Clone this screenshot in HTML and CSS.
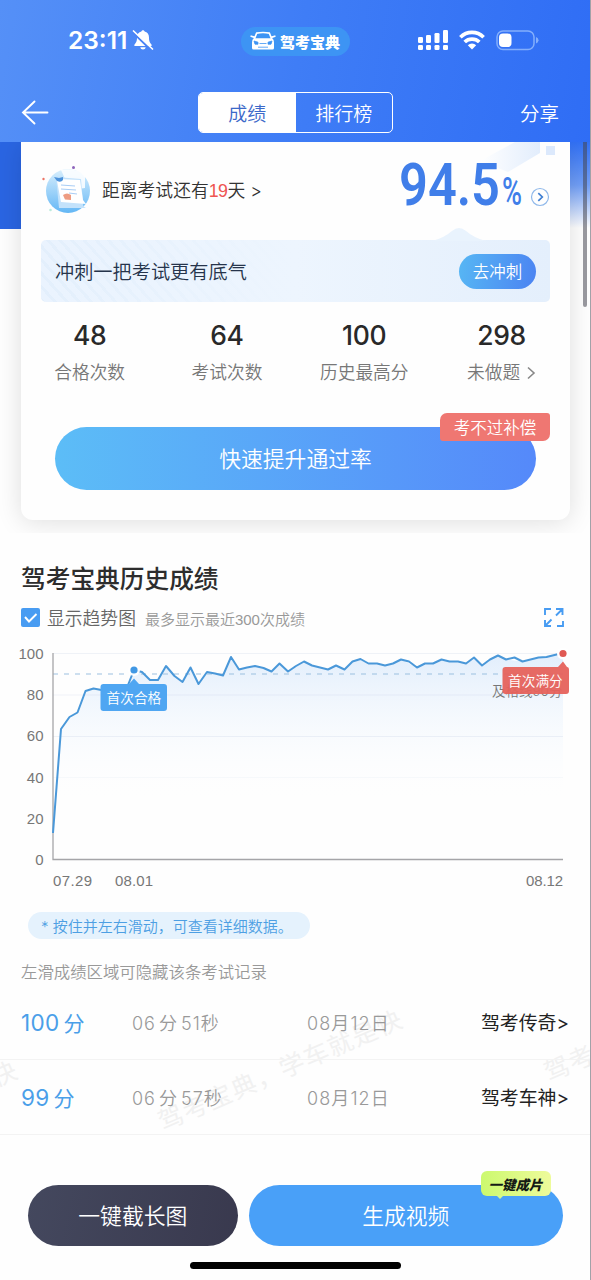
FILE: index.html
```html
<!DOCTYPE html>
<html lang="zh-CN">
<head>
<meta charset="utf-8">
<title>驾考宝典</title>
<link rel="stylesheet" href="styles.css">
</head>
<body>
<div class="screen">
  <header class="header">
    <div class="status">
      <div class="clock">
        <span class="time">23:11</span>
        <svg width="22" height="22" viewBox="0 0 22 22"><path d="M11 1.200c-.9 0-1.500.6-1.600 1.400C6.600 3.300 5 5.500 5 8.500c0 4-1 5.300-2.300 6.700-.8 1-.4 1.800.5 1.800h15.600c.9 0 1.300-.8.5-1.800C18 13.800 17 12.500 17 8.500c0-3-1.600-5.200-4.400-5.900C12.500 1.800 11.900 1.200 11 1.200zM8.300 18.300c.3 1.400 1.300 2.200 2.700 2.200s2.400-.8 2.700-2.200z" fill="#fff"/><path d="M1 3.500L18.500 20.500" stroke="#4a83f5" stroke-width="2.200"/><path d="M1.500 2l19 18" stroke="#fff" stroke-width="1.700" stroke-linecap="round"/></svg>
      </div>
      <div class="brand">
        <svg width="26" height="20" viewBox="0 0 26 20"><g fill="none" stroke="#fff" stroke-width="1.700" stroke-linejoin="round" stroke-linecap="round"><path d="M4.500 7.500L6.600 2.200Q13 .8 19.400 2.200l2.100 5.300M1.200 5.200l2.800.9M24.800 5.200l-2.800.9"/></g><path d="M4 7.200h18q2 1.200 2 4V17q0 1.500-1.500 1.500h-19Q2 18.500 2 17v-5.800q0-2.800 2-4z" fill="#fff"/><path d="M4 10l4 1.200v2H5zM22 10l-4 1.200v2h3zM9.500 12.500h7M8 16.200h10" fill="#3d94f4" stroke="#3d94f4" stroke-width=".8"/></svg>
        <span class="brand-name">驾考宝典</span>
      </div>
      <div class="signals">
        <svg width="32" height="22" viewBox="0 0 32 22" fill="#fff"><rect x="1" y="8" width="5" height="6" rx="1.300"/><rect x="9" y="6" width="5" height="8" rx="1.300"/><rect x="17.500" y="4" width="5" height="10" rx="1.300"/><rect x="26" y="1" width="5" height="13" rx="1.300"/><rect x="1" y="16" width="5" height="5" rx="1.300"/><rect x="9" y="16" width="5" height="5" rx="1.300"/><rect x="17.500" y="16" width="5" height="5" rx="1.300"/><rect x="26" y="16" width="5" height="5" rx="1.300"/></svg>
        <svg width="26" height="20" viewBox="0 0 26 20"><g fill="none" stroke="#fff" stroke-width="3.700"><path d="M1.400 7.200a16.500 16.500 0 0 1 23.200 0M5.700 12a10.500 10.500 0 0 1 14.600 0"/></g><path d="M8.800 15.300a6 6 0 0 1 8.400 0L13 19.500z" fill="#fff"/></svg>
        <svg width="44" height="21" viewBox="0 0 44 21"><rect x="2" y="1" width="37" height="18.500" rx="6" fill="none" stroke="#83aefc" stroke-width="1.500"/><rect x="4" y="3.500" width="12.500" height="13.500" rx="4" fill="#fff"/><path d="M41 7q2.500 1 2.500 3.300T41 13.500z" fill="#83aefc"/></svg>
      </div>
    </div>
    <nav class="nav">
      <svg class="back" width="28" height="26" viewBox="0 0 28 26" fill="none" stroke="#fff" stroke-width="1.900" stroke-linecap="round"><path d="M26.500 12.500H2M13.500 1.500L2 12.500l11.500 11"/></svg>
      <div class="tabs"><span class="tab tab-on">成绩</span><span class="tab">排行榜</span></div>
      <span class="share">分享</span>
    </nav>
  </header>

  <section class="summary">
    <div class="scrollbar"></div>
    <div class="card">
      <svg class="card-decor" width="80" height="35" viewBox="0 0 80 35"><defs><linearGradient id="dg"><stop offset="0" stop-color="#fff"/><stop offset="1" stop-color="#e2edfc"/></linearGradient></defs><path d="M0 19L35 0H60v11L28 30z" fill="url(#dg)"/><rect x="66" y="4" width="9" height="9" fill="#dce9fc"/></svg>
      <div class="exam">
        <svg width="52" height="52" viewBox="0 0 52 52"><defs><linearGradient id="orb" x1="0" y1="0" x2="0" y2="1"><stop offset="0" stop-color="#d9effd"/><stop offset="1" stop-color="#64b7f5"/></linearGradient></defs><circle cx="27" cy="26" r="22" fill="url(#orb)"/><path d="M20 5q15-3 24 6v12l-15 2z" fill="#fff" opacity=".85"/><path d="M15 12l25 2 2 23q-1 4 3 6H18z" fill="#c3e2fb"/><path d="M18 14l21 1 3 20 3 4-25-2-4-21z" fill="#fff"/><path d="M13 12l5 1 4-1v3q-2 3-6 1z" fill="#4e93db"/><path d="M20 20l14 1M20 24l15 1M28 28l8 1" stroke="#a9cdf5" stroke-width="1.200"/><path d="M22 30q4-3 8 0v5l-6-.5z" fill="#ee9c82"/><circle cx="32.500" cy="2.500" r="1.500" fill="#8e65bb"/><circle cx="2.500" cy="14" r="1.200" fill="#ec7465"/><circle cx="9.500" cy="45" r="1.300" fill="#bcebdc"/></svg>
        <span class="countdown">距离考试还有<em>19</em>天 &gt;</span>
        <svg class="rate" width="128" height="72" viewBox="0 0 128 72"><g font-family="Roboto, sans-serif" fill="#407ee9"><text x="0" y="56" font-size="60" font-weight="600" textLength="101" lengthAdjust="spacingAndGlyphs">94.5</text><text x="103" y="56" font-size="39" font-weight="500" textLength="20" lengthAdjust="spacingAndGlyphs">%</text></g></svg>
        <svg class="go" width="20" height="20" viewBox="0 0 20 20" fill="none"><circle cx="10" cy="10" r="8.500" stroke="#8fb8ea" stroke-width="1.200"/><path d="M8.300 6.200l4 3.800-4 3.800" stroke="#3f7fd2" stroke-width="1.700"/></svg>
      </div>
      <div class="banner">
        <svg class="banner-peak" width="54" height="14" viewBox="0 0 54 14"><path d="M0 14Q12 11 20 4q7-6 14 0 8 7 20 10z" fill="#e9f3fd"/></svg>
        <span class="banner-text">冲刺一把考试更有底气</span>
        <span class="banner-btn">去冲刺</span>
      </div>
      <div class="stats">
        <div class="stat"><b>48</b><span>合格次数</span></div>
        <div class="stat"><b>64</b><span>考试次数</span></div>
        <div class="stat"><b>100</b><span>历史最高分</span></div>
        <div class="stat"><b>298</b><span>未做题<svg width="9" height="14" viewBox="0 0 9 14" fill="none" stroke="#888" stroke-width="1.600"><path d="M1 1.500L7 7 1 12.500"/></svg></span></div>
      </div>
      <div class="boost">快速提升通过率<span class="ribbon">考不过补偿</span></div>
    </div>
  </section>

  <section class="history">
    <h1 class="title">驾考宝典历史成绩</h1>
    <div class="options">
      <svg width="20" height="20" viewBox="0 0 20 20"><rect x="0" y="0" width="19" height="19" rx="2" fill="#489cf2"/><path d="M4 9l4 4.500 7.500-7.500" fill="none" stroke="#fff" stroke-width="1.900"/></svg>
      <span class="opt-label">显示趋势图</span>
      <span class="opt-hint">最多显示最近300次成绩</span>
      <svg class="expand" width="20" height="20" viewBox="0 0 20 20" fill="none" stroke="#489cf2" stroke-width="1.900"><path d="M1 7V1h6M19 13v5h-6M12 1h6.500v6M18 1.500l-6 6M7 18H1v-6M1.500 17.500l6-6"/></svg>
    </div>
    <svg class="chart" width="591" height="254" viewBox="0 640 591 254">
      <defs><linearGradient id="area" x1="0" y1="655" x2="0" y2="805" gradientUnits="userSpaceOnUse"><stop offset="0" stop-color="#e2eefc"/><stop offset="1" stop-color="#fff" stop-opacity="0"/></linearGradient></defs>
      <polygon fill="url(#area)" points="53,833 61,729 69.500,717 77.500,712.500 85.500,691 93.500,688.500 101.500,690 126,690 134,670 142,672 150,680 158,680 166,666 174.500,676 182.500,682 190.500,667.500 198.500,684 207,672 223,675.500 231,657 239,669.500 255,666 271.500,671.500 279.500,663.500 288,671.500 304,661.500 312,665.500 328,669.500 336,665.500 344.500,669.500 352.500,661.500 360.500,659 368.500,663.500 385,665.500 401,659.500 417,667.500 441.500,659.500 466,663.500 474,657.500 482,665.500 498,655.500 506,659.500 522.500,661.500 563,653 563,859 53,859"/>
      <path d="M53 653.500H563M53 695H563M53 736.500H563" stroke="#8aa3c8" stroke-opacity=".13"/>
      <path d="M53 777.500H563" stroke="#8aa3c8" stroke-opacity=".06"/>
      <path d="M53 674H563" stroke="#9cbfe0" stroke-width="1.200" stroke-dasharray="5 6"/>
      <path d="M53 653V859.500H563" fill="none" stroke="#a5a5a8" stroke-width="1.300"/>
      <polyline fill="none" stroke="#4a98d9" stroke-width="2" stroke-linejoin="round" points="53,833 61,729 69.500,717 77.500,712.500 85.500,691 93.500,688.500 101.500,690 109.500,690 126,690 134,670 142,672 150,680 158,680 166,666 174.500,676 182.500,682 190.500,667.500 198.500,684 207,672 215,673.500 223,675.500 231,657 239,669.500 247,667.500 255,666 263.500,668 271.500,671.500 279.500,663.500 288,671.500 296,666 304,661.500 312,665.500 320,667.500 328,669.500 336,665.500 344.500,669.500 352.500,661.500 360.500,659 368.500,663.500 377,663.500 385,665.500 393,663.500 401,659.500 409,661.500 417,667.500 425,663.500 433,663.500 441.500,659.500 449.500,661.500 458,661.500 466,663.500 474,657.500 482,665.500 490,659.500 498,655.500 506,659.500 514.500,657.500 522.500,661.500 530.500,659.500 538.500,657.500 546.500,657 554.500,655 563,653"/>
      <text class="limit" x="492" y="695.500">及格线90分</text>
      <circle cx="134" cy="670" r="6" fill="#fff" fill-opacity=".93"/><circle cx="134" cy="670" r="3.600" fill="#4198e4"/>
      <circle cx="563" cy="653.500" r="6" fill="#fff"/><circle cx="563" cy="653.500" r="3.600" fill="#e05953"/>
      <path d="M103.500 684H129l5-5.500 5 5.500h25q3 0 3 3v21q0 3-3 3h-60.500q-3 0-3-3v-21q0-3 3-3z" fill="#4fa6f2"/>
      <path d="M505.500 667H558l5-5.500 4 5.500q2 0 2 3v21q0 3-3 3h-60.500q-3 0-3-3v-21q0-3 3-3z" fill="#e6625c" fill-opacity=".95"/>
      <text class="tip" x="106.500" y="702.500">首次合格</text><text class="tip" x="508" y="686">首次满分</text>
      <g class="axis"><g text-anchor="end"><text x="43.500" y="658.500">100</text><text x="43.500" y="700">80</text><text x="43.500" y="741">60</text><text x="43.500" y="782.500">40</text><text x="43.500" y="824">20</text><text x="43.500" y="865">0</text></g><text x="53" y="886" textLength="39">07.29</text><text x="115" y="886" textLength="38">08.01</text><text x="526" y="886" textLength="37">08.12</text></g>
    </svg>
    <div class="notice">* 按住并左右滑动，可查看详细数据。</div>
    <p class="swipe">左滑成绩区域可隐藏该条考试记录</p>
    <div class="records">
      <svg class="watermark" width="591" height="135" viewBox="0 1000 591 135"><text transform="translate(163 1130) rotate(-23.500)">驾考宝典，学车就是快</text><text transform="translate(-222 1181) rotate(-23.500)">驾考宝典，学车就是快</text><text transform="translate(549 1081) rotate(-23.500)">驾考宝典，学车就是快</text></svg>
      <div class="record"><span class="score">100<i>分</i></span><span class="spent">06<i>分</i>51秒</span><span class="date">08月12日</span><span class="rank">驾考传奇&gt;</span></div>
      <div class="record"><span class="score">99<i>分</i></span><span class="spent">06<i>分</i>57秒</span><span class="date">08月12日</span><span class="rank">驾考车神&gt;</span></div>
    </div>
  </section>

  <footer class="footer">
    <div class="actions">
      <div class="action shot">一键截长图</div>
      <div class="action video">生成视频<span class="bubble">一键成片</span></div>
    </div>
    <div class="home"></div>
  </footer>
</div>
</body>
</html>
```
FILE: styles.css
```css
* { box-sizing: border-box; }
body { margin: 0; background: #fefefe; }
.screen {
  position: relative;
  width: 591px;
  height: 1280px;
  overflow: hidden;
  display: flex;
  flex-direction: column;
  background: #fefefe;
  border-right: 1px solid #a2a2a8;
  font-family: Inter, "Noto Sans CJK SC", sans-serif;
  font-weight: 350;
  color: #333;
}
svg { display: block; flex: none; overflow: visible; }
em, i { font-style: normal; }

.header { height: 142px; flex: none; margin-right: -1px; background: linear-gradient(100deg, #5590f7 0%, #3f7df6 50%, #2f6df5 100%); }
.status { height: 82px; display: flex; align-items: center; padding: 0 52px 2px 68px; }
.clock { display: flex; align-items: center; gap: 5px; width: 173px; color: #fff; }
.time { font-size: 24.5px; font-weight: 600; letter-spacing: 0; }
.brand { width: 109px; height: 29px; margin-top: 2px; border-radius: 15px; background: #3d94f4; display: flex; align-items: center; gap: 4px; padding-left: 9px; }
.brand-name { color: #fff; font-size: 15px; font-weight: 900; white-space: nowrap; }
.signals { margin-left: auto; display: flex; align-items: center; gap: 10px; }
.nav { display: flex; align-items: center; height: 41px; margin-top: 10px; padding: 0 32px 0 21px; color: #fff; }
.tabs { margin-left: 149px; width: 195px; height: 41px; display: flex; border: 1.5px solid #fff; border-radius: 5px; overflow: hidden; }
.tab { flex: 1; display: flex; align-items: center; justify-content: center; font-size: 19px; padding-bottom: 1px; }
.tab-on { background: #fff; color: #3c69c9; }
.share { margin-left: auto; font-size: 19.5px; padding-bottom: 1px; }

.summary {
  position: relative;
  height: 391px;
  flex: none;
  padding: 0 20px 0 21px;
  overflow: hidden;
  background:
    linear-gradient(#2a65e2, #2a65e2) 0 0 / 21px 87px no-repeat,
    linear-gradient(#3271f5 0%, #719ff7 50%, #fefefe 100%) 569px 0 / 22px 86px no-repeat;
}
.card { position: relative; height: 378px; background: #fefefe; border-radius: 0 0 12px 12px; box-shadow: 0 2px 26px rgba(0, 0, 0, .13); }
.scrollbar { position: absolute; z-index: 2; right: 3px; top: 0; width: 4px; height: 165px; border-radius: 0 0 2px 2px; background: rgba(70, 70, 80, .55); }
.card-decor { position: absolute; right: 10px; top: 0; }
.exam { position: relative; height: 98px; display: flex; align-items: center; padding-left: 20px; }
.countdown { margin-left: 9px; font-size: 17.8px; white-space: nowrap; padding-bottom: 4px; }
.countdown em { color: #ef5552; font-family: "Liberation Sans", sans-serif; letter-spacing: -0.5px; }
.rate { margin-left: auto; margin-top: -13px; }
.go { margin: 12px 20px 0 3px; }
.banner {
  position: relative;
  height: 62px;
  margin: 0 20px;
  padding: 0 14px;
  display: flex;
  align-items: center;
  justify-content: space-between;
  border-radius: 5px;
  background:
    linear-gradient(90deg, transparent 0%, #edf5fe 50%, #e4effc 100%),
    repeating-linear-gradient(48deg, #e3effc 0 3px, #eaf3fe 3px 9px);
}
.banner-peak { position: absolute; left: 391px; top: -13px; }
.banner-text { font-size: 19.2px; color: #26344b; }
.banner-btn { width: 77px; height: 35px; border-radius: 18px; background: linear-gradient(100deg, #57b7f4, #4b83f2); color: #fff; font-size: 16.5px; display: flex; align-items: center; justify-content: center; }
.stats { height: 125px; display: grid; grid-template-columns: repeat(4, 137.3px); padding-top: 14px; }
.stat { display: flex; flex-direction: column; align-items: center; }
.stat b { font-size: 26.5px; line-height: 38px; font-weight: 500; letter-spacing: -0.3px; color: #292929; }
.stat span { display: flex; align-items: center; gap: 7px; margin-top: 6px; font-size: 17.7px; line-height: 26px; color: #777; }
.boost { position: relative; height: 63px; margin: 0 34px; padding-bottom: 2px; border-radius: 32px; background: linear-gradient(90deg, #5cbdf7, #5589fa); display: flex; align-items: center; justify-content: center; color: #fff; font-size: 21.8px; }
.ribbon { position: absolute; right: -14px; top: -14px; width: 110px; height: 28px; border-radius: 7px 3px 7px 3px; background: #ef7772; font-size: 16.5px; display: flex; align-items: center; justify-content: center; }

.history { display: flex; flex-direction: column; height: 602px; flex: none; }
.title { margin: 28px 0 0 21px; font-size: 24.7px; line-height: 37px; font-weight: 500; color: #2d2d2d; }
.options { display: flex; align-items: center; height: 28px; margin-top: 6px; padding: 0 26px 0 21px; }
.opt-label { margin-left: 6px; font-size: 17.8px; color: #666; padding-bottom: 2px; }
.opt-hint { margin-left: 9px; font-family: "Liberation Sans", "Noto Sans CJK SC", sans-serif; font-size: 15px; color: #999; }
.expand { margin-left: auto; }
.chart { margin-top: 8px; }
.axis { font: 400 15px "Liberation Sans", sans-serif; fill: #777; }
.tip { font-size: 13.7px; fill: #fff; }
.limit { font-size: 13.5px; fill: #777; }
.notice { width: 282px; height: 27px; margin: 18px 0 0 28px; padding-bottom: 1px; border-radius: 14px; background: #e5f2fd; color: #4d9fe3; display: flex; align-items: center; padding-left: 13px; font-size: 15px; white-space: nowrap; }
.swipe { margin: 20px 0 0 21px; font-size: 16.4px; line-height: 26px; color: #999; }
.records { position: relative; }
.watermark { position: absolute; left: 0; top: 16px; font-size: 25px; letter-spacing: 1.4px; fill: #f1f1f1; font-weight: 400; }
.record { position: relative; height: 75px; padding-bottom: 1px; display: grid; grid-template-columns: 111px 175px 110px 1fr; align-items: center; padding: 0 21px 1px; border-bottom: 1px solid #f3f3f3; font-size: 18px; color: #999; }
.score { font-size: 22.5px; color: #4a9fe9; font-weight: 400; letter-spacing: .3px; }
.score i { margin-left: 4px; font-size: 21px; }
.spent { letter-spacing: 1px; }
.spent i { margin: 0 3px; }
.date { letter-spacing: 1.1px; }
.rank { text-align: right; color: #222; font-weight: 400; font-size: 18.9px; white-space: nowrap; }

.footer { height: 145px; flex: none; padding-top: 50px; }
.actions { display: flex; gap: 11px; padding: 0 27px 0 28px; }
.action { height: 61px; padding-bottom: 2px; border-radius: 31px; display: flex; align-items: center; justify-content: center; color: #fff; font-size: 21.8px; }
.shot { width: 210px; background: linear-gradient(100deg, #44485e, #39394e); }
.video { position: relative; width: 315px; background: #49a0f8; }
.bubble { position: absolute; left: 232px; top: -14px; width: 70px; height: 25px; border-radius: 6px; background: linear-gradient(90deg, #ccf96f, #eefb9b); color: #151a15; display: flex; align-items: center; justify-content: center; font-size: 13.5px; font-weight: 900; font-style: italic; }
.bubble::after { content: ""; position: absolute; left: 15px; top: 24px; border: 4px solid transparent; border-top-color: #d5f98a; border-bottom: 0; }
.home { width: 211px; height: 7px; margin: 16px 0 0 190px; border-radius: 4px; background: #000; }
```
